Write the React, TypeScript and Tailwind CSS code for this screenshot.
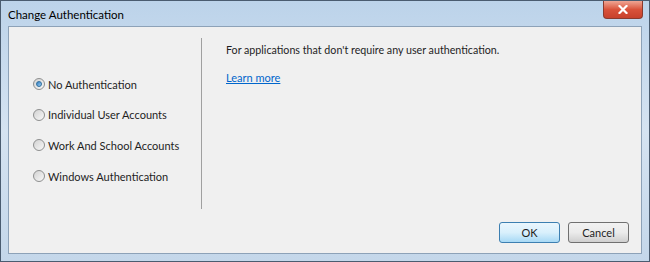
import React, { useState } from 'react';

const options = [
  'No Authentication',
  'Individual User Accounts',
  'Work And School Accounts',
  'Windows Authentication',
];

const Radio: React.FC<{ checked: boolean }> = ({ checked }) => (
  <span className="relative flex h-[12px] w-[12px] shrink-0 items-center justify-center rounded-full border border-[#8e8f8f] bg-gradient-to-br from-[#d2d2d2] to-[#f8f8f8]">
    {checked && (
      <span className="h-[6px] w-[6px] rounded-full border border-[#2e6f9e] bg-gradient-to-br from-[#2b7bc0] to-[#9fd0f4]" />
    )}
  </span>
);

export default function App() {
  const [selected, setSelected] = useState(0);

  return (
    <div
      className="flex h-[262px] w-[650px] flex-col overflow-hidden border border-[#4a5c70] bg-gradient-to-b from-[#bcd3ea] via-[#d5e3f1] to-[#c4d7ea] text-[11px] text-[#1e1e1e]"
      style={{ fontFamily: 'Lato, "Open Sans", sans-serif' }}
    >
      {/* Title bar */}
      <div className="flex h-[25px] shrink-0 items-start justify-between">
        <span className="pl-[7px] pt-[5px] text-[11.5px] text-black">Change Authentication</span>
        <button className="mr-[6px] flex h-[18px] w-[40px] items-center justify-center rounded-b-[4px] border border-t-0 border-[#8a3a2e] bg-gradient-to-b from-[#eea594] via-[#d9523a] to-[#c8412c]">
          <svg width="10" height="9" viewBox="0 0 10 9">
            <path d="M1.5 1 L8.5 8 M8.5 1 L1.5 8" stroke="#ffffff" strokeWidth="2.2" strokeLinecap="square" />
          </svg>
        </button>
      </div>

      {/* Client area */}
      <div className="mx-[7px] mb-[7px] flex flex-1 flex-col border border-[#8da2b8] bg-[#f0f0f0]">
        <div className="flex flex-1 pt-[11px]">
          <div className="flex w-[193px] flex-col gap-[16.7px] border-r border-[#a0a0a0] pl-[24px] pt-[39px]" style={{ height: 171 }}>
            {options.map((label, i) => (
              <label key={label} className="flex h-[14px] cursor-default items-center gap-[3px]" onClick={() => setSelected(i)}>
                <Radio checked={selected === i} />
                <span className="leading-none">{label}</span>
              </label>
            ))}
          </div>
          <div className="flex flex-col pl-[24px] pt-[4px]">
            <p className="text-[10.7px] leading-[16px]">For applications that don't require any user authentication.</p>
            <a className="mt-[12px] leading-[16px] text-[#0066cc] underline">Learn more</a>
          </div>
        </div>
        <div className="flex justify-end gap-[8px] pb-[10px] pr-[12px]">
          <button className="h-[21px] w-[61px] rounded-[3px] border border-[#3c7fb1] bg-gradient-to-b from-[#eaf6fd] via-[#d9f0fc] to-[#a7d9f5] leading-none">
            OK
          </button>
          <button className="h-[21px] w-[61px] rounded-[3px] border border-[#707070] bg-gradient-to-b from-[#f2f2f2] via-[#ebebeb] to-[#cfcfcf] leading-none">
            Cancel
          </button>
        </div>
      </div>
    </div>
  );
}
